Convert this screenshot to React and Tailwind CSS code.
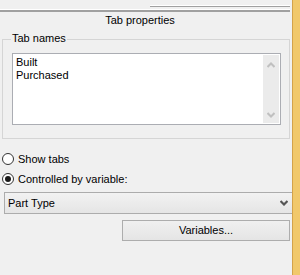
import React from "react";

function Chevron({ up = false, color = "#c0c0c0", width = 2 }) {
  return (
    <svg width="8" height="6" viewBox="0 0 8 6" className="block">
      <path
        d={up ? "M0.5 5 L4 1.5 L7.5 5" : "M0.5 1 L4 4.5 L7.5 1"}
        fill="none"
        stroke={color}
        strokeWidth={width}
      />
    </svg>
  );
}

function Radio({ checked, label }) {
  return (
    <div className="h-[20px] flex items-center">
      <div className="ml-[2px] w-[12px] h-[12px] rounded-full border border-[#333] bg-white flex items-center justify-center">
        {checked && <div className="w-[6px] h-[6px] rounded-full bg-[#1a1a1a]" />}
      </div>
      <span className="ml-[4px] leading-[13px]">{label}</span>
    </div>
  );
}

export default function App() {
  return (
    <div className="w-[300px] h-[275px] bg-[#f0f0f0] flex overflow-hidden text-[11px] text-black font-['Liberation_Sans',Arial,sans-serif]">
      <div className="w-[292px] flex flex-col">
        {/* panel edges at the top */}
        <div className="h-[12px] flex flex-col">
          <div className="mt-[5px] ml-[150px] w-[140px] h-[2px] border-t border-white border-b border-b-[#a0a0a0]" />
          <div className="mt-[2px] w-[290px] h-[3px] border-t border-white bg-[#a0a0a0]" />
        </div>

        {/* title */}
        <div className="w-[280px] h-[27px] pt-[2px] text-center leading-[13px]">Tab properties</div>

        {/* Tab names group */}
        <div className="relative ml-[2px] w-[288px] h-[100px] border border-[#d5d5d5] pt-[13px] pl-[9px]">
          <span className="absolute left-[8px] top-[-8px] px-[1px] bg-[#f0f0f0] leading-[13px]">Tab names</span>
          <div className="w-[269px] h-[72px] border border-[#abadb3] bg-white flex">
            <div className="flex-1 pl-[3px] pt-[2px] leading-[13px]">
              <div>Built</div>
              <div>Purchased</div>
            </div>
            <div className="my-[1px] mr-[1px] w-[16px] bg-[#ebebeb] flex flex-col items-center justify-between pt-[7px] pb-[5px]">
              <Chevron up />
              <Chevron />
            </div>
          </div>
        </div>

        {/* radios */}
        <div className="mt-[10px] flex flex-col">
          <Radio label="Show tabs" />
          <Radio checked label="Controlled by variable:" />
        </div>

        {/* dropdown */}
        <div className="mt-[3px] ml-[4px] h-[22px] border border-r-0 border-[#acacac] bg-gradient-to-b from-[#f2f2f2] to-[#e5e5e5] flex items-center justify-between pl-[3px] pr-[4px]">
          <span className="leading-[13px]">Part Type</span>
          <Chevron color="#555" width={2.2} />
        </div>

        {/* button */}
        <div className="mt-[6px] ml-[122px] w-[168px] h-[21px] border border-[#adadad] bg-gradient-to-b from-[#f0f0f0] to-[#e5e5e5] flex items-center justify-center">
          <span className="leading-[13px]">Variables...</span>
        </div>
      </div>

      {/* window edge */}
      <div className="w-[8px] border-l border-[#d4a24a] bg-[#f1c86b]" />
    </div>
  );
}
